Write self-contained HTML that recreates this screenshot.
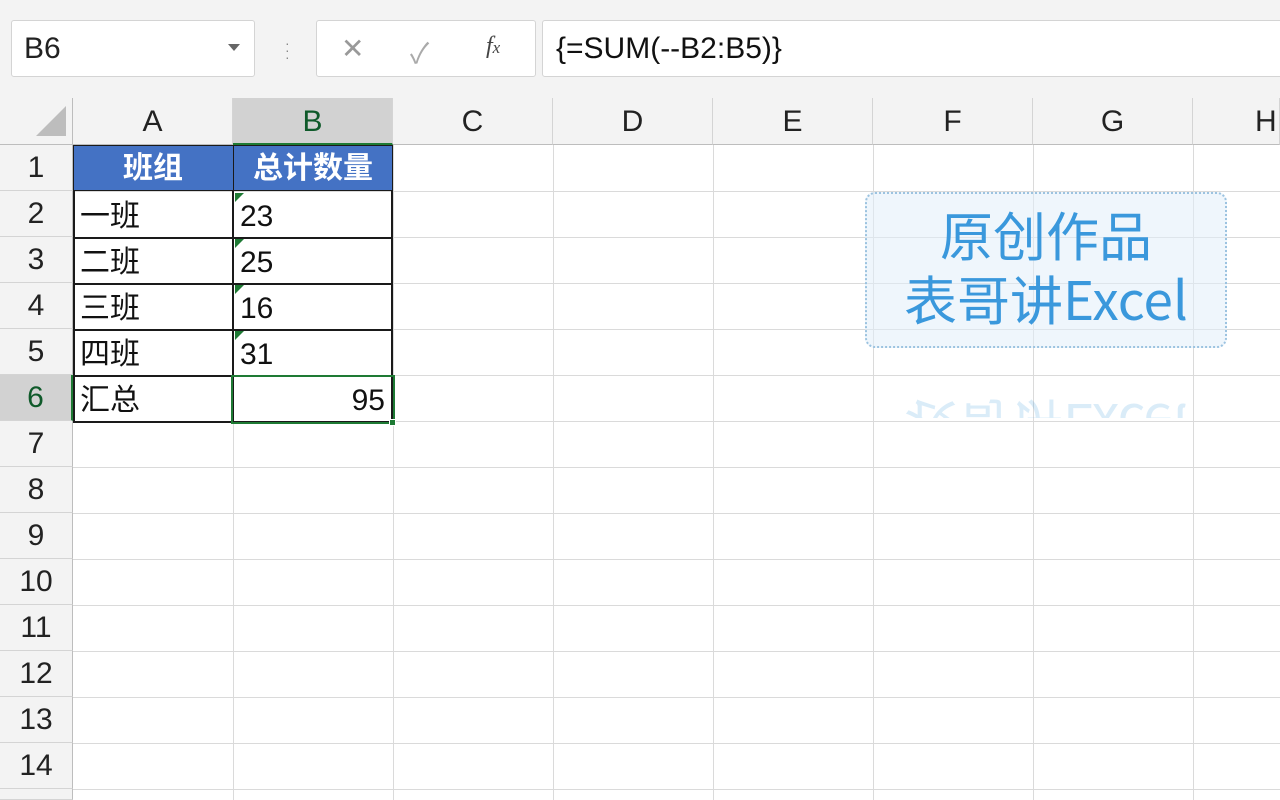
<!DOCTYPE html>
<html><head><meta charset="utf-8"><style>
*{margin:0;padding:0;box-sizing:border-box}
html,body{width:1280px;height:800px;overflow:hidden}
body{background:#fff;font-family:"Liberation Sans","Noto Sans CJK SC",sans-serif;position:relative}
.a{position:absolute}
.top{left:0;top:0;width:1280px;height:98px;background:#f3f3f3}
.box{background:#fff;border:1px solid #d4d4d4;border-radius:3px}
.ch{top:98px;height:47px;background:#f3f3f3;border-right:1px solid #d4d4d4;border-bottom:1px solid #bdbdbd;font-size:30px;color:#222;text-align:center;line-height:47px}
.rh{left:0;width:73px;height:46px;background:#f3f3f3;border-bottom:1px solid #d4d4d4;border-right:1px solid #bdbdbd;font-size:30px;color:#222;text-align:center;line-height:46px}
.hl{height:1px;background:#dadada;left:73px;width:1207px}
.vl{width:1px;background:#dadada;top:145px;height:655px}
.c{font-size:30px;color:#111;line-height:48px;height:46px}
.tri{width:0;height:0;border-top:9px solid #1e7a34;border-right:9px solid transparent}
.wm{font-family:"Noto Sans CJK SC",sans-serif;font-weight:400}
</style></head><body>
<div class="a top"></div>
<div class="a box" style="left:11px;top:20px;width:244px;height:57px"></div>
<div class="a" style="left:24px;top:32px;font-size:30px;color:#222">B6</div>
<div class="a" style="left:228px;top:44px;border-left:6px solid transparent;border-right:6px solid transparent;border-top:7px solid #666"></div>
<div class="a" style="left:285px;top:40px;color:#888;font-size:14px;line-height:7px">·<br>·<br>·</div>
<div class="a box" style="left:316px;top:20px;width:220px;height:57px"></div>
<div class="a" style="left:341px;top:32px;font-size:28px;color:#999">✕</div>
<div class="a" style="left:410px;top:32px;font-size:28px;color:#aaa">✓</div>
<div class="a" style="left:486px;top:33px;font-size:24px;color:#444;font-family:'Liberation Serif',serif;font-style:italic">f<span style="font-size:17px">x</span></div>
<div class="a box" style="left:542px;top:20px;width:750px;height:57px"></div>
<div class="a" style="left:556px;top:32px;font-size:30px;color:#111">{=SUM(--B2:B5)}</div>

<div class="a" style="left:0;top:98px;width:73px;height:47px;background:#f3f3f3;border-right:1px solid #bdbdbd;border-bottom:1px solid #bdbdbd"></div>
<div class="a" style="left:36px;top:106px;width:0;height:0;border-left:30px solid transparent;border-bottom:30px solid #bdbdbd"></div>
<div class="a ch" style="left:73px;width:160px">A</div>
<div class="a ch" style="left:233px;width:160px;background:#d2d2d2;color:#0f5a2a;border-bottom:2px solid #1e7a34">B</div>
<div class="a ch" style="left:393px;width:160px">C</div>
<div class="a ch" style="left:553px;width:160px">D</div>
<div class="a ch" style="left:713px;width:160px">E</div>
<div class="a ch" style="left:873px;width:160px">F</div>
<div class="a ch" style="left:1033px;width:160px">G</div>
<div class="a ch" style="left:1193px;width:87px;text-align:left;padding-left:62px;overflow:hidden">H</div>

<div class="a rh" style="top:145px">1</div>
<div class="a rh" style="top:191px">2</div>
<div class="a rh" style="top:237px">3</div>
<div class="a rh" style="top:283px">4</div>
<div class="a rh" style="top:329px">5</div>
<div class="a rh" style="top:375px;background:#d2d2d2;color:#0f5a2a;border-right:2px solid #1e7a34">6</div>
<div class="a rh" style="top:421px">7</div>
<div class="a rh" style="top:467px">8</div>
<div class="a rh" style="top:513px">9</div>
<div class="a rh" style="top:559px">10</div>
<div class="a rh" style="top:605px">11</div>
<div class="a rh" style="top:651px">12</div>
<div class="a rh" style="top:697px">13</div>
<div class="a rh" style="top:743px">14</div>
<div class="a rh" style="top:789px;height:11px"></div>

<div class="a hl" style="top:191px"></div><div class="a hl" style="top:237px"></div><div class="a hl" style="top:283px"></div><div class="a hl" style="top:329px"></div><div class="a hl" style="top:375px"></div><div class="a hl" style="top:421px"></div><div class="a hl" style="top:467px"></div><div class="a hl" style="top:513px"></div><div class="a hl" style="top:559px"></div><div class="a hl" style="top:605px"></div><div class="a hl" style="top:651px"></div><div class="a hl" style="top:697px"></div><div class="a hl" style="top:743px"></div><div class="a hl" style="top:789px"></div>
<div class="a vl" style="left:233px"></div><div class="a vl" style="left:393px"></div><div class="a vl" style="left:553px"></div><div class="a vl" style="left:713px"></div><div class="a vl" style="left:873px"></div><div class="a vl" style="left:1033px"></div><div class="a vl" style="left:1193px"></div>

<div class="a" style="left:73px;top:145px;width:320px;height:46px;background:#4472c4;border:1px solid #1a1a1a"></div>
<div class="a" style="left:233px;top:145px;width:1px;height:46px;background:#1a1a1a"></div>
<div class="a c" style="left:73px;top:145px;width:160px;text-align:center;color:#fff;font-weight:bold">班组</div>
<div class="a c" style="left:233px;top:145px;width:160px;text-align:center;color:#fff;font-weight:bold">总计数量</div>

<div class="a" style="left:73px;top:191px;width:320px;height:232px;border:2px solid #1a1a1a;border-top:none"></div>
<div class="a" style="left:232px;top:191px;width:2px;height:232px;background:#1a1a1a"></div>
<div class="a" style="left:73px;top:237px;width:320px;height:2px;background:#1a1a1a"></div>
<div class="a" style="left:73px;top:283px;width:320px;height:2px;background:#1a1a1a"></div>
<div class="a" style="left:73px;top:329px;width:320px;height:2px;background:#1a1a1a"></div>
<div class="a" style="left:73px;top:375px;width:320px;height:2px;background:#1a1a1a"></div>

<div class="a c" style="left:80px;top:193px">一班</div>
<div class="a c" style="left:80px;top:239px">二班</div>
<div class="a c" style="left:80px;top:285px">三班</div>
<div class="a c" style="left:80px;top:331px">四班</div>
<div class="a c" style="left:80px;top:377px">汇总</div>
<div class="a c" style="left:240px;top:193px">23</div>
<div class="a c" style="left:240px;top:239px">25</div>
<div class="a c" style="left:240px;top:285px">16</div>
<div class="a c" style="left:240px;top:331px">31</div>
<div class="a tri" style="left:235px;top:193px"></div>
<div class="a tri" style="left:235px;top:239px"></div>
<div class="a tri" style="left:235px;top:285px"></div>
<div class="a tri" style="left:235px;top:331px"></div>
<div class="a" style="left:231px;top:375px;width:164px;height:49px;border:2px solid #1e7a34"></div>
<div class="a c" style="left:233px;top:377px;width:152px;text-align:right">95</div>
<div class="a" style="left:389px;top:419px;width:7px;height:7px;background:#1e7a34;border:1px solid #fff"></div>

<div class="a" style="left:865px;top:192px;width:362px;height:156px;border:2px dotted #9cc3e0;border-radius:10px;background:rgba(225,238,250,0.55)"></div>
<div class="a wm" style="left:845px;top:202px;width:402px;text-align:center;font-size:53px;line-height:64px;color:#3a98dc">原创作品<br>表哥讲Excel</div>
<div class="a wm" style="left:845px;top:394px;width:402px;height:24px;overflow:hidden;text-align:center;opacity:.18;color:#3a98dc;font-size:53px;line-height:64px;transform:scaleY(-1)"><div style="margin-top:-40px">表哥讲Excel</div></div>
</body></html>
